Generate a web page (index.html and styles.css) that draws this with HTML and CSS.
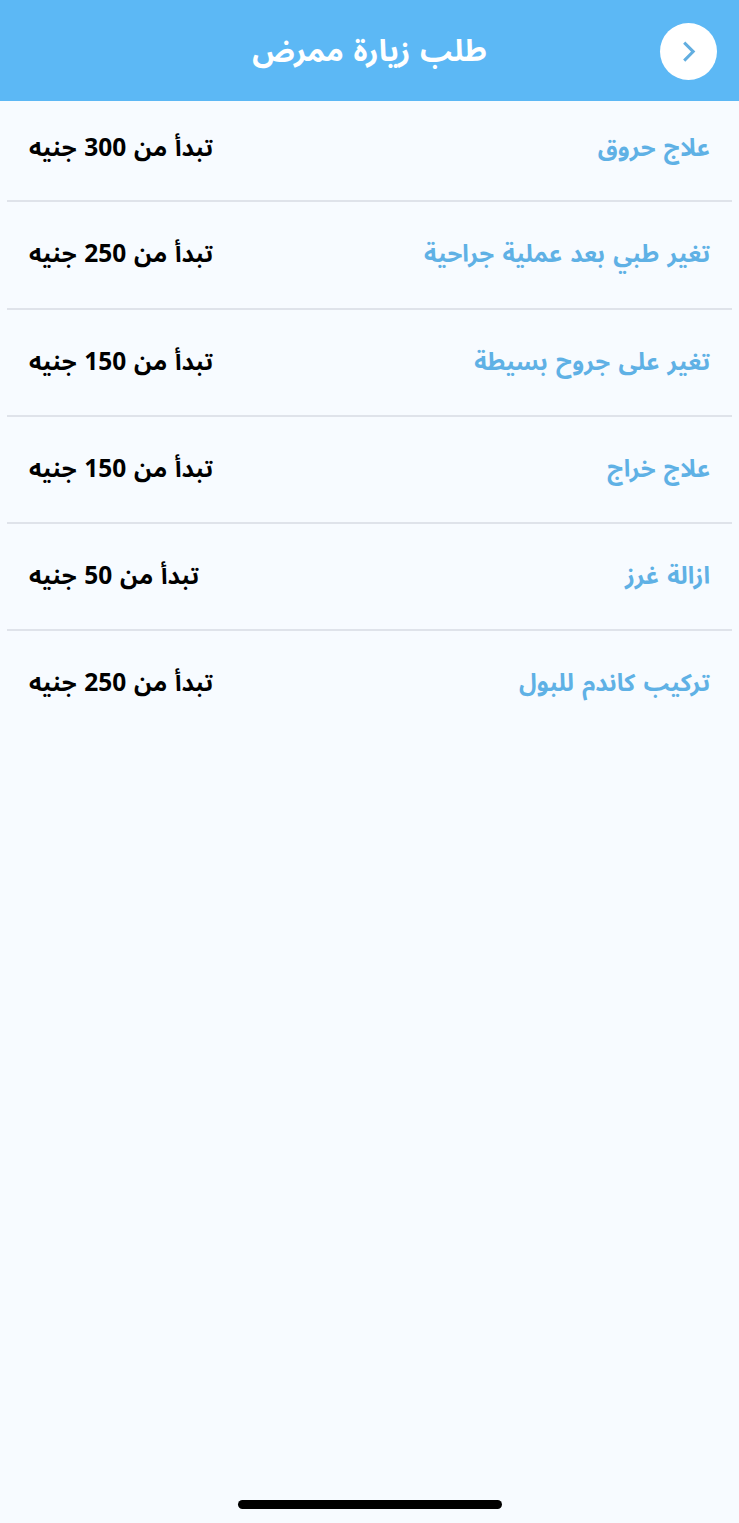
FILE: index.html
```html
<!DOCTYPE html>
<html lang="ar" dir="rtl">
<head>
    <meta charset="UTF-8">
    <meta name="viewport" content="width=device-width, initial-scale=1.0">
    <title>طلب زيارة ممرض</title>
    <link rel="stylesheet" href="styles.css">
</head>
<body>
    <header class="header">
        <button class="back-button" aria-label="رجوع">
            <svg width="57" height="57" viewBox="0 0 57 57" fill="none">
                <path d="M24.2 19.6l9 9-9 9" stroke="#62aee0" stroke-width="3"/>
            </svg>
        </button>
        <h1>طلب زيارة ممرض</h1>
    </header>

    <main>
        <ul class="services">
            <li><span class="name">علاج حروق</span><span class="price">تبدأ من <b>300</b> جنيه</span></li>
            <li><span class="name">تغير طبي بعد عملية جراحية</span><span class="price">تبدأ من <b>250</b> جنيه</span></li>
            <li><span class="name">تغير على جروح بسيطة</span><span class="price">تبدأ من <b>150</b> جنيه</span></li>
            <li><span class="name">علاج خراج</span><span class="price">تبدأ من <b>150</b> جنيه</span></li>
            <li><span class="name">ازالة غرز</span><span class="price">تبدأ من <b>50</b> جنيه</span></li>
            <li><span class="name">تركيب كاندم للبول</span><span class="price">تبدأ من <b>250</b> جنيه</span></li>
        </ul>
    </main>

    <div class="home-indicator"></div>
</body>
</html>
```
FILE: styles.css
```css
:root {
    --primary-color: #5cb8f5;
    --name-color: #5fb1e5;
    --background-color: #f7fbff;
    --border-color: #dfe3ea;
}

* {
    margin: 0;
    padding: 0;
    box-sizing: border-box;
}

body {
    display: flex;
    flex-direction: column;
    min-height: 1523px;
    font-family: 'Noto Sans', 'Noto Sans Arabic', 'Open Sans', sans-serif;
    word-spacing: 2px;
    background-color: var(--background-color);
    color: #000;
}

.header {
    display: grid;
    grid-template-columns: 57px 1fr 57px;
    align-items: center;
    height: 101px;
    padding: 1px 22px 0;
    background-color: var(--primary-color);
}

.header h1 {
    font-size: 30px;
    font-weight: 700;
    text-align: center;
    color: #fff;
}

.back-button {
    width: 57px;
    height: 57px;
    border: none;
    border-radius: 50%;
    background-color: #fff;
}

main {
    flex: 1;
    padding: 0 7px;
}

.services {
    list-style: none;
}

.services li {
    display: flex;
    align-items: center;
    justify-content: space-between;
    height: 107.2px;
    padding: 0 22px;
    border-bottom: 2px solid var(--border-color);
    font-size: 24px;
    font-weight: 700;
}

.services li:first-child {
    height: 101.4px;
    padding-bottom: 5px;
}

.services li:last-child {
    padding-bottom: 3px;
    border-bottom: none;
}

.services .name {
    color: var(--name-color);
}

.services .price {
    word-spacing: 1.5px;
}

.services b {
    font-size: 24.5px;
    font-weight: 700;
    letter-spacing: -0.8px;
}

.home-indicator {
    width: 264px;
    height: 9px;
    margin: 0 auto 14px;
    border-radius: 5px;
    background-color: #000;
}
```
